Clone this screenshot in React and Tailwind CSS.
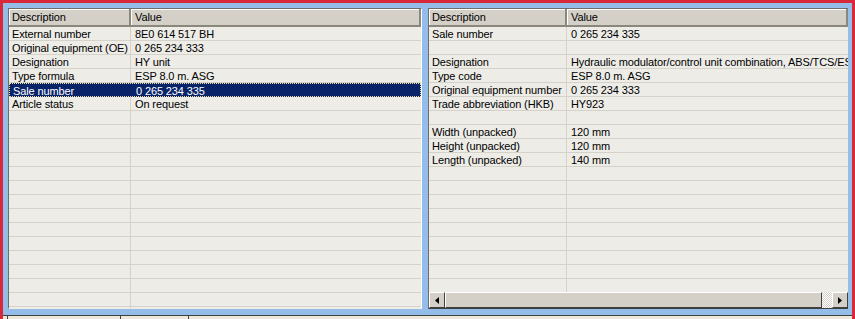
import React from 'react';

const leftRows = [
  ['External number', '8E0 614 517 BH'],
  ['Original equipment (OE)', '0 265 234 333'],
  ['Designation', 'HY unit'],
  ['Type formula', 'ESP 8.0 m. ASG'],
  ['Sale number', '0 265 234 335'],
  ['Article status', 'On request'],
];

const rightRows = [
  ['Sale number', '0 265 234 335'],
  ['', ''],
  ['Designation', 'Hydraulic modulator/control unit combination, ABS/TCS/ESP'],
  ['Type code', 'ESP 8.0 m. ASG'],
  ['Original equipment number', '0 265 234 333'],
  ['Trade abbreviation (HKB)', 'HY923'],
  ['', ''],
  ['Width (unpacked)', '120 mm'],
  ['Height (unpacked)', '120 mm'],
  ['Length (unpacked)', '140 mm'],
];

const Header = ({ firstWidth }) => (
  <div className="flex h-[18px] shrink-0 bg-[#d4d0c8] leading-[16px] text-black">
    <div className={`${firstWidth} shrink-0 pl-[3px] border-r-2 border-b-2 border-[#8a877c] shadow-[inset_1px_1px_0_#ffffff]`}>
      Description
    </div>
    <div className="flex-1 pl-[4px] border-r-2 border-b-2 border-[#8a877c] shadow-[inset_1px_1px_0_#ffffff]">Value</div>
  </div>
);

const Row = ({ desc, value, selected, firstWidth }) => (
  <div
    className={`flex h-[14px] shrink-0 leading-[15px] whitespace-nowrap ${
      selected ? 'bg-[#0a246a] text-white border border-dotted border-[#f0e0a0] leading-[13px]' : 'border-b border-[#d5d2ca] text-black'
    }`}
  >
    <div className={`${firstWidth} shrink-0 pl-[3px] ${selected ? '' : 'border-r border-[#d5d2ca]'}`}>{desc}</div>
    <div className="flex-1 pl-[4px] overflow-hidden">{value}</div>
  </div>
);

const Grid = ({ rows, selected, firstWidth, fill, className, children }) => (
  <div className={`flex flex-col bg-[#edece7] border-l border-t border-[#6f6d66] overflow-hidden ${className}`}>
    <Header firstWidth={firstWidth} />
    <div className="flex-1 flex flex-col overflow-hidden">
      {rows.map((r, i) => (
        <Row key={i} desc={r[0]} value={r[1]} selected={i === selected} firstWidth={firstWidth} />
      ))}
      {Array.from({ length: fill }).map((_, i) => (
        <Row key={'e' + i} desc="" value="" firstWidth={firstWidth} />
      ))}
    </div>
    {children}
  </div>
);

const ScrollBar = () => (
  <div className="flex h-[16px] shrink-0 bg-[#d4d0c8]">
    <div className="w-[16px] h-[16px] flex items-center justify-center border-t border-l border-white border-r border-b border-r-[#404040] border-b-[#404040]">
      <svg width="4" height="7" viewBox="0 0 4 7">
        <polygon points="4,0 0,3.5 4,7" fill="#000" />
      </svg>
    </div>
    <div className="w-[377px] h-[16px] border-t border-l border-white border-r border-b border-r-[#404040] border-b-[#404040] bg-[#d4d0c8]" />
    <div className="flex-1 bg-[repeating-conic-gradient(#ffffff_0%_25%,#d4d0c8_0%_50%)] bg-[length:2px_2px]" />
    <div className="w-[16px] h-[16px] flex items-center justify-center border-t border-l border-white border-r border-b border-r-[#404040] border-b-[#404040]">
      <svg width="4" height="7" viewBox="0 0 4 7">
        <polygon points="0,0 4,3.5 0,7" fill="#000" />
      </svg>
    </div>
  </div>
);

export default function App() {
  return (
    <div className="w-[855px] h-[319px] flex flex-col overflow-hidden bg-[#ece9d8] font-['Liberation_Sans',Arial,sans-serif] text-[11px] tracking-[-0.12px]">
      <div className="flex-1 flex flex-col border-t-[3px] border-x-[3px] border-[#d8283a] bg-[#94bdea] min-h-0">
        <div className="flex-1 flex pt-[5px] pl-[5px] pr-[4px] pb-[4px] gap-[6px] min-h-0">
          <Grid rows={leftRows} selected={4} firstWidth="w-[122px]" fill={16} className="w-[414px] border-r border-b border-r-white border-b-[#edece7]" />
          <Grid rows={rightRows} selected={-1} firstWidth="w-[138px]" fill={12} className="flex-1 border-b border-b-[#404040]">
            <ScrollBar />
          </Grid>
        </div>
      </div>
      <div className="h-[6px] shrink-0 flex bg-[#94bdea] border-x-[3px] border-[#d8283a]">
        <div className="flex-1 flex mt-[2px] border-t border-[#404040] bg-[#ece9d8] pl-[4px]">
          <div className="w-[113px] border-l border-[#404040]" />
          <div className="w-[68px] border-l border-[#404040]" />
          <div className="flex-1 border-l border-[#404040]" />
        </div>
      </div>
    </div>
  );
}
